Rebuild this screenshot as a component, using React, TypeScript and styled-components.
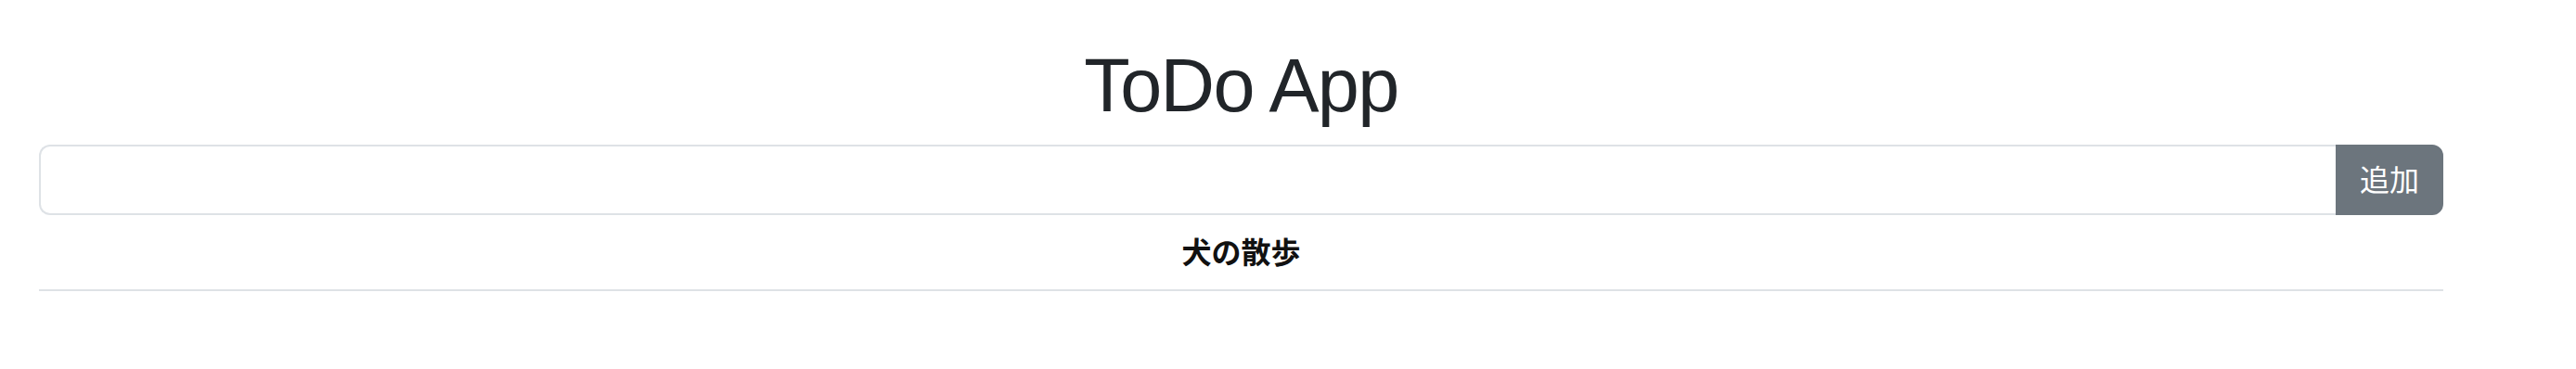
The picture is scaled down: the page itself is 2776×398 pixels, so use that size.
import React from "react";
import styled, { createGlobalStyle } from "styled-components";

const Global = createGlobalStyle`
  html, body { margin: 0; padding: 0; background: #fff; }
  body { font-family: "Liberation Sans", "Noto Sans CJK JP", sans-serif; color: #212529; }
  * { box-sizing: border-box; }
`;

const Container = styled.div`
  width: 2591px;
  margin-left: 42px;
  padding-top: 44px;
`;

const Title = styled.h1`
  margin: 0 0 16px;
  font-size: 81px;
  line-height: 96px;
  font-weight: 400;
  letter-spacing: -1.6px;
  text-align: center;
  color: #212529;
`;

const InputGroup = styled.div`
  display: flex;
  height: 76px;
`;

const TextInput = styled.input`
  flex: 1;
  min-width: 0;
  border: 2px solid #dee2e6;
  border-right: none;
  border-radius: 12px 0 0 12px;
  font-size: 32px;
  padding: 0 24px;
  outline: none;
  font-family: inherit;
`;

const AddButton = styled.button`
  width: 116px;
  border: 2px solid #6c757d;
  background: #6c757d;
  color: #fff;
  border-radius: 0 12px 12px 0;
  font-family: "Noto Sans CJK JP", sans-serif;
  font-size: 32px;
  padding: 0 24px 4px;
  cursor: pointer;
`;

const Table = styled.table`
  width: 100%;
  border-collapse: collapse;
`;

const Cell = styled.td`
  padding: 14px 16px 18px;
  height: 80px;
  border-bottom: 2px solid #dee2e6;
  text-align: center;
  font-family: "Noto Sans CJK JP", sans-serif;
  font-weight: 700;
  font-size: 32px;
  line-height: 48px;
  color: #111;
`;

export default function App() {
  const todos = ["犬の散歩"];
  return (
    <>
      <Global />
      <Container>
        <Title>ToDo App</Title>
        <InputGroup>
          <TextInput type="text" />
          <AddButton>追加</AddButton>
        </InputGroup>
        <Table>
          <tbody>
            {todos.map((t) => (
              <tr key={t}>
                <Cell>{t}</Cell>
              </tr>
            ))}
          </tbody>
        </Table>
      </Container>
    </>
  );
}
